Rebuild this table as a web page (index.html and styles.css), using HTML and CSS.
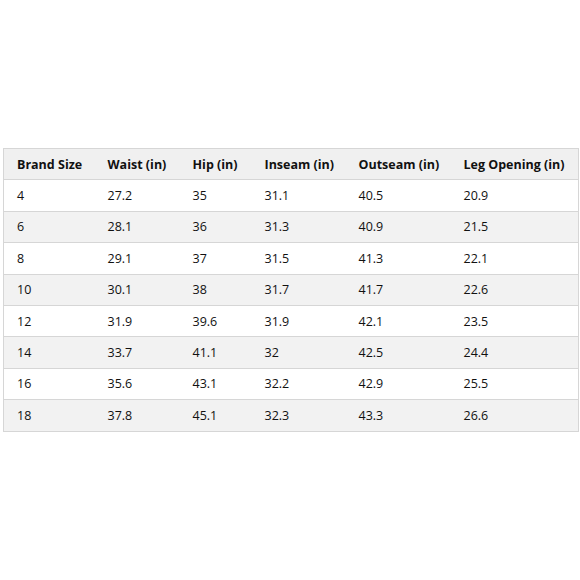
FILE: index.html
```html
<!DOCTYPE html>
<html>
<head>
<meta charset="utf-8">
<link rel="stylesheet" href="styles.css">
</head>
<body>
<div class="page">
<table class="size-table">
<colgroup>
<col class="c1"><col class="c2"><col class="c3"><col class="c4"><col class="c5"><col class="c6">
</colgroup>
<thead>
<tr><th>Brand Size</th><th>Waist (in)</th><th>Hip (in)</th><th>Inseam (in)</th><th>Outseam (in)</th><th>Leg Opening (in)</th></tr>
</thead>
<tbody>
<tr><td>4</td><td>27.2</td><td>35</td><td>31.1</td><td>40.5</td><td>20.9</td></tr>
<tr><td>6</td><td>28.1</td><td>36</td><td>31.3</td><td>40.9</td><td>21.5</td></tr>
<tr><td>8</td><td>29.1</td><td>37</td><td>31.5</td><td>41.3</td><td>22.1</td></tr>
<tr><td>10</td><td>30.1</td><td>38</td><td>31.7</td><td>41.7</td><td>22.6</td></tr>
<tr><td>12</td><td>31.9</td><td>39.6</td><td>31.9</td><td>42.1</td><td>23.5</td></tr>
<tr><td>14</td><td>33.7</td><td>41.1</td><td>32</td><td>42.5</td><td>24.4</td></tr>
<tr><td>16</td><td>35.6</td><td>43.1</td><td>32.2</td><td>42.9</td><td>25.5</td></tr>
<tr><td>18</td><td>37.8</td><td>45.1</td><td>32.3</td><td>43.3</td><td>26.6</td></tr>
</tbody>
</table>
</div>
</body>
</html>
```
FILE: styles.css
```css
html, body {
  margin: 0;
  padding: 0;
  background: #ffffff;
}
.page {
  padding: 148px 0 0 3px;
}
.size-table {
  width: 575px;
  border-collapse: collapse;
  table-layout: fixed;
  font-family: "Open Sans", "Liberation Sans", sans-serif;
  font-size: 12.5px;
  color: #111111;
  border: 1px solid #d6d6d6;
}
.c1 { width: 91px; }
.c2 { width: 85px; }
.c3 { width: 72px; }
.c4 { width: 94px; }
.c5 { width: 105px; }
.c6 { width: 128px; }
.size-table th,
.size-table td {
  height: 30.4px;
  padding: 0 0 0 13px;
  text-align: left;
  vertical-align: middle;
  border-bottom: 1px solid #d6d6d6;
  white-space: nowrap;
}
.size-table th {
  font-weight: 700;
  background: #f0f0f0;
}
.size-table tbody tr:nth-child(even) td {
  background: #f2f2f2;
}
```
